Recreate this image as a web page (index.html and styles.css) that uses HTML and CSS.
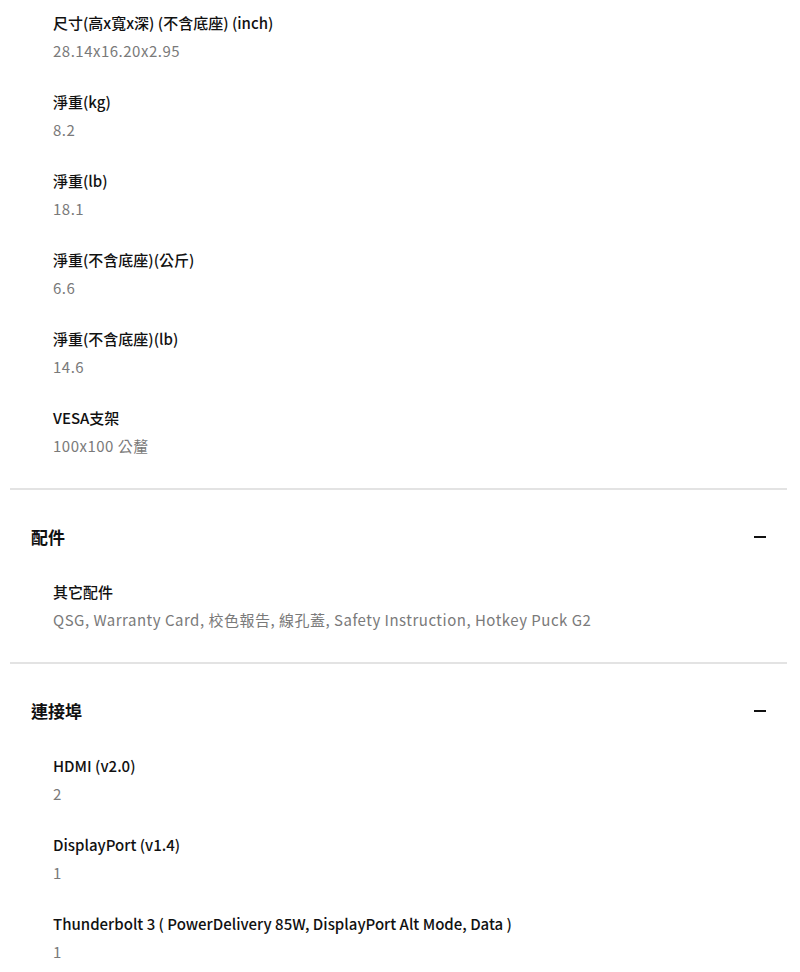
FILE: index.html
```html
<!DOCTYPE html>
<html lang="zh-Hant">
<head>
    <meta charset="UTF-8">
    <meta name="viewport" content="width=device-width, initial-scale=1.0">
    <title>規格</title>
    <link rel="stylesheet" href="styles.css">
</head>
<body>
    <div class="specs">
        <div class="spec-group open">
            <ul class="spec-list">
                <li><h4>尺寸(高x寬x深) (不含底座) (inch)</h4><p>28.14x16.20x2.95</p></li>
                <li><h4>淨重(kg)</h4><p>8.2</p></li>
                <li><h4>淨重(lb)</h4><p>18.1</p></li>
                <li><h4>淨重(不含底座)(公斤)</h4><p>6.6</p></li>
                <li><h4>淨重(不含底座)(lb)</h4><p>14.6</p></li>
                <li><h4>VESA支架</h4><p>100x100 公釐</p></li>
            </ul>
        </div>
        <div class="spec-group">
            <div class="group-head">
                <h3>配件</h3>
                <span class="toggle"></span>
            </div>
            <ul class="spec-list">
                <li><h4>其它配件</h4><p>QSG, Warranty Card, 校色報告, 線孔蓋, Safety Instruction, Hotkey Puck G2</p></li>
            </ul>
        </div>
        <div class="spec-group">
            <div class="group-head">
                <h3>連接埠</h3>
                <span class="toggle"></span>
            </div>
            <ul class="spec-list">
                <li><h4>HDMI (v2.0)</h4><p>2</p></li>
                <li><h4>DisplayPort (v1.4)</h4><p>1</p></li>
                <li><h4>Thunderbolt 3 ( PowerDelivery 85W, DisplayPort Alt Mode, Data )</h4><p>1</p></li>
            </ul>
        </div>
    </div>
</body>
</html>
```

FILE: styles.css
```css
body {
    margin: 0;
    background: #fff;
    font-family: "Noto Sans CJK TC", "Noto Sans", sans-serif;
    color: #111;
}
.specs {
    width: 777px;
    margin-left: 10px;
}
.spec-group {
    border-bottom: 2px solid #e3e3e3;
    padding: 35px 0 31px;
}
.spec-group.open {
    padding-top: 12px;
}
.group-head {
    display: flex;
    justify-content: space-between;
    align-items: center;
    padding: 0 21px;
    margin-bottom: 32px;
}
.group-head h3 {
    margin: 0;
    font-size: 17px;
    line-height: 24px;
    font-weight: 700;
}
.toggle {
    width: 12px;
    height: 2px;
    background: #111;
}
.spec-list {
    list-style: none;
    margin: 0;
    padding: 0 0 0 43px;
    display: flex;
    flex-direction: column;
    gap: 29px;
}
.spec-list h4 {
    margin: 0;
    font-size: 15px;
    line-height: 22px;
    font-weight: 500;
}
.spec-list p {
    margin: 6px 0 0;
    font-size: 15px;
    line-height: 22px;
    letter-spacing: 0.5px;
    color: #7a7a7a;
}
```
